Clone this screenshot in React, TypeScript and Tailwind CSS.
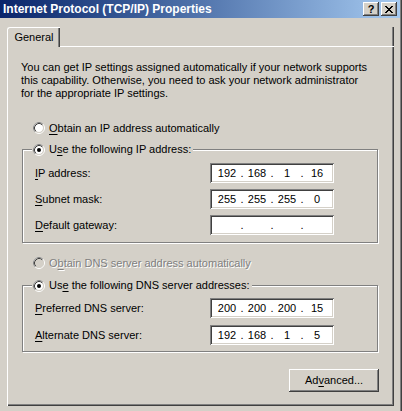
import { Fragment } from "react";

const sunken =
  "shadow-[inset_1px_1px_0_#808080,inset_-1px_-1px_0_#ffffff,inset_2px_2px_0_#404040,inset_-2px_-2px_0_#d4d0c8]";
const raised =
  "shadow-[inset_-1px_-1px_0_#404040,inset_1px_1px_0_#ffffff,inset_-2px_-2px_0_#808080,inset_2px_2px_0_#d4d0c8]";

function Radio({ checked, disabled }: { checked?: boolean; disabled?: boolean }) {
  return (
    <svg width="12" height="12" viewBox="0 0 12 12" className="shrink-0">
      <circle cx="6" cy="6" r="4.2" fill={disabled ? "#d4d0c8" : "#ffffff"} />
      <circle cx="6" cy="6" r="5.5" fill="none" stroke="#ffffff" />
      <path d="M2.11 9.89A5.5 5.5 0 0 1 9.89 2.11" fill="none" stroke="#808080" />
      <circle cx="6" cy="6" r="4.5" fill="none" stroke="#d4d0c8" />
      <path d="M2.82 9.18A4.5 4.5 0 0 1 9.18 2.82" fill="none" stroke="#404040" />
      {checked && <circle cx="6" cy="6" r="2" fill="#000000" />}
    </svg>
  );
}

// accelerator letter
function U({ children }: { children: string }) {
  return <span className="underline underline-offset-[2px]">{children}</span>;
}

function IpField({ parts }: { parts: string[] }) {
  return (
    <div className={`w-[124px] h-[20px] bg-white flex items-center px-[2px] ${sunken}`}>
      {parts.map((p, i) => (
        <Fragment key={i}>
          {i > 0 && <span className="w-0 flex justify-center">.</span>}
          <span className="flex-1 text-center">{p}</span>
        </Fragment>
      ))}
    </div>
  );
}

function Row({ label, parts }: { label: React.ReactNode; parts: string[] }) {
  return (
    <div className="flex items-center h-[20px]">
      <div className="w-[187px] pl-[12px]">{label}</div>
      <IpField parts={parts} />
    </div>
  );
}

function CloseGlyph() {
  return (
    <svg width="8" height="7" viewBox="0 0 8 7" shapeRendering="crispEdges">
      <path
        fill="#000"
        d="M0 0h2v1h-2z M6 0h2v1h-2z M1 1h2v1h-2z M5 1h2v1h-2z M2 2h4v1h-4z M3 3h2v1h-2z M2 4h4v1h-4z M1 5h2v1h-2z M5 5h2v1h-2z M0 6h2v1h-2z M6 6h2v1h-2z"
      />
    </svg>
  );
}

export default function App() {
  return (
    <div className="w-[402px] h-[411px] overflow-hidden bg-[#d4d0c8] border-r border-[#404040] font-['Liberation_Sans',Arial,sans-serif] text-[11px] text-black">
      <div className="h-full border-r border-[#808080]">
        {/* Caption */}
        <div className="h-[18px] flex items-center bg-linear-to-r from-[#0a246a] to-[#a6caf0] pl-[3px] pr-[3px]">
          <span className="flex-1 text-white font-bold text-[12px] whitespace-nowrap">
            Internet Protocol (TCP/IP) Properties
          </span>
          <div className={`w-[16px] h-[14px] bg-[#d4d0c8] flex items-center justify-center font-bold text-[11px] leading-none ${raised}`}>
            ?
          </div>
          <div className={`ml-[2px] w-[16px] h-[14px] bg-[#d4d0c8] flex items-center justify-center ${raised}`}>
            <CloseGlyph />
          </div>
        </div>

        <div className="pl-[7px] pr-[6px] pt-[9px]">
          {/* Tabs */}
          <div className="flex h-[20px]">
            <div className="w-[53px] h-[20px] border-l border-t border-white rounded-tl-[3px] flex items-center justify-center shadow-[inset_-1px_0_0_#404040,inset_-2px_0_0_#808080]">
              General
            </div>
            <div className="flex-1 border-b border-white shadow-[inset_-1px_0_0_#404040,inset_-2px_0_0_#808080]" />
          </div>

          {/* Panel */}
          <div className="flex flex-col pl-[15px] pr-[16px] pt-[14px] pb-[14px] shadow-[inset_1px_0_0_#ffffff,inset_-1px_-1px_0_#404040,inset_-2px_-2px_0_#808080]">
            <p className="ml-[-1px] leading-[13px] whitespace-nowrap">
              You can get IP settings assigned automatically if your network supports
              <br />
              this capability. Otherwise, you need to ask your network administrator
              <br />
              for the appropriate IP settings.
            </p>

            <div className="mt-[21px] h-[14px] flex items-center gap-[4px] pl-[11px]">
              <Radio />
              <span>
                <U>O</U>btain an IP address automatically
              </span>
            </div>

            <div className="relative mt-[14px] h-[94px] border border-[#808080] shadow-[1px_1px_0_#ffffff,inset_1px_1px_0_#ffffff]">
              <div className="absolute left-[9px] top-[-7px] h-[13px] flex items-center gap-[4px] bg-[#d4d0c8] pl-[1px] pr-[2px]">
                <Radio checked />
                <span>
                  U<U>s</U>e the following IP address:
                </span>
              </div>
              <div className="flex flex-col gap-[6px] pt-[13px]">
                <Row label={<><U>I</U>P address:</>} parts={["192", "168", "1", "16"]} />
                <Row label={<><U>S</U>ubnet mask:</>} parts={["255", "255", "255", "0"]} />
                <Row label={<><U>D</U>efault gateway:</>} parts={["", "", "", ""]} />
              </div>
            </div>

            <div className="mt-[13px] h-[14px] flex items-center gap-[4px] pl-[11px]">
              <Radio disabled />
              <span className="text-[#808080] [text-shadow:1px_1px_0_#ffffff]">
                O<U>b</U>tain DNS server address automatically
              </span>
            </div>

            <div className="relative mt-[15px] h-[67px] border border-[#808080] shadow-[1px_1px_0_#ffffff,inset_1px_1px_0_#ffffff]">
              <div className="absolute left-[9px] top-[-7px] h-[13px] flex items-center gap-[4px] bg-[#d4d0c8] pl-[1px] pr-[2px]">
                <Radio checked />
                <span>
                  Us<U>e</U> the following DNS server addresses:
                </span>
              </div>
              <div className="flex flex-col gap-[7px] pt-[12px]">
                <Row label={<><U>P</U>referred DNS server:</>} parts={["200", "200", "200", "15"]} />
                <Row label={<><U>A</U>lternate DNS server:</>} parts={["192", "168", "1", "5"]} />
              </div>
            </div>

            <div className="mt-[17px] flex justify-end">
              <button className={`mr-[-1px] w-[90px] h-[23px] bg-[#d4d0c8] flex items-center justify-center ${raised}`}>
                Ad<U>v</U>anced...
              </button>
            </div>
          </div>
        </div>
      </div>
    </div>
  );
}
